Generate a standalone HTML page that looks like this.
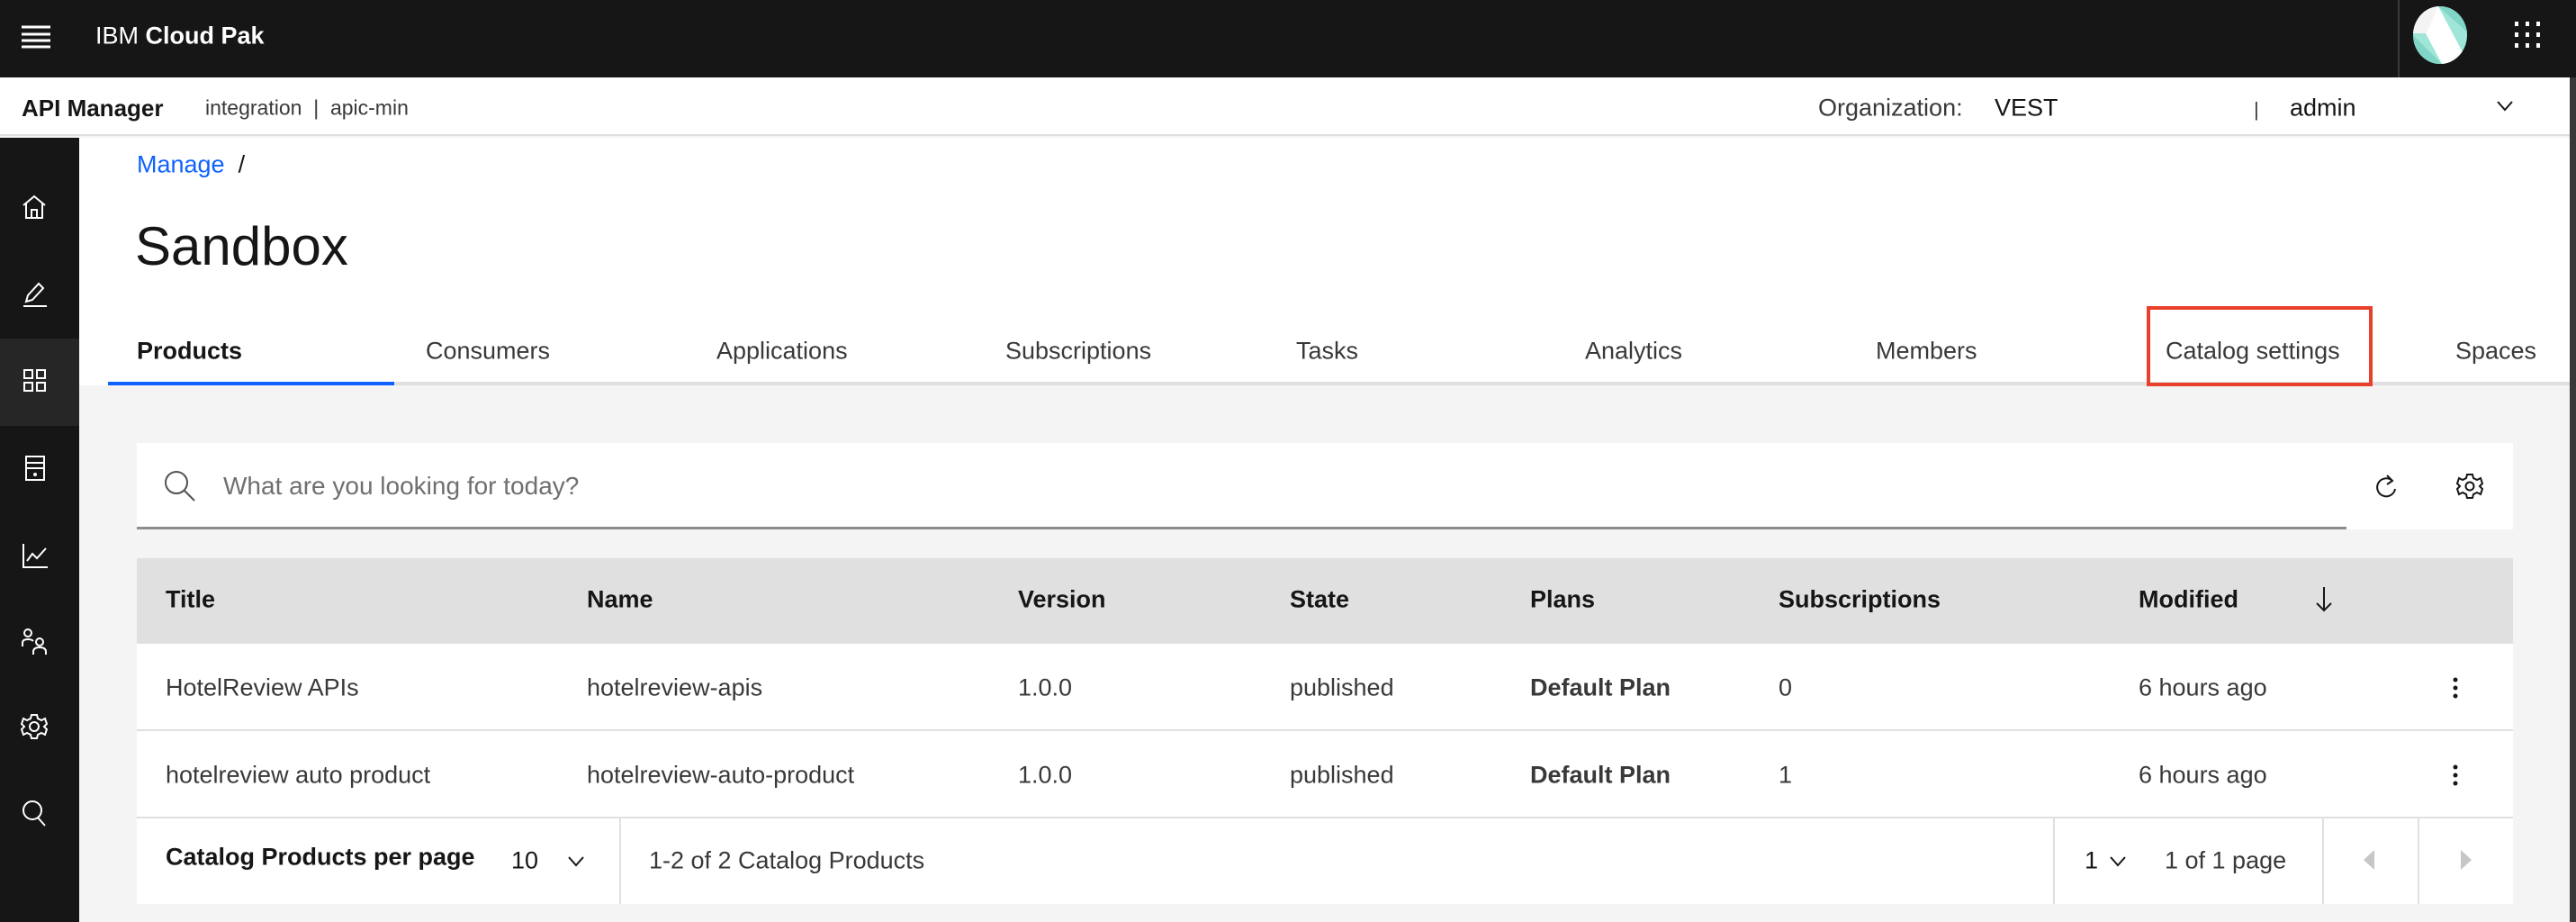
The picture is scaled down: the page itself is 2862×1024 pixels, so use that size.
<!DOCTYPE html>
<html><head><meta charset="utf-8"><style>
*{margin:0;padding:0;box-sizing:border-box}
body{width:2862px;height:1024px;position:relative;overflow:hidden;font-family:"Liberation Sans",sans-serif;background:#f4f4f4;color:#161616}
.a{position:absolute;white-space:nowrap}
.t{font-size:27px;line-height:1;transform:translateY(-50%)}
.b{font-weight:bold}
svg{position:absolute;overflow:visible}
</style></head><body>
<!-- top bar -->
<div class="a" style="left:0;top:0;width:2862px;height:86px;background:#161616"></div>
<div class="a" style="left:2664px;top:0;width:2px;height:86px;background:#393939"></div>
<svg style="left:24px;top:28px" width="32" height="26" viewBox="0 0 32 26"><g stroke="#fff" stroke-width="3"><path d="M0 2H32M0 10H32M0 17H32M0 24H32"/></g></svg>
<div class="a t" style="left:106px;top:40px;color:#fff;font-size:27px">IBM <b>Cloud Pak</b></div>
<svg style="left:2679px;top:7px" width="64" height="64" viewBox="0 0 64 64"><defs><clipPath id="c"><ellipse cx="32" cy="32" rx="30" ry="32"/></clipPath></defs><g clip-path="url(#c)"><rect width="64" height="64" fill="#9fe6d9"/><path d="M0 0H30L64 64H34Z" fill="#fff"/><path d="M30 0H64V30Z" fill="#80d5c6"/><path d="M0 30L34 64H0Z" fill="#80d5c6"/><path d="M0 0H30L17 30H0Z" fill="#f4f4f4"/></g></svg>
<svg style="left:2794px;top:24px" width="30" height="30" viewBox="0 0 30 30"><g fill="#fff"><rect x="0" y="0" width="4" height="5"/><rect x="12" y="0" width="4" height="5"/><rect x="24" y="0" width="4" height="5"/><rect x="0" y="12" width="4" height="5"/><rect x="12" y="12" width="4" height="5"/><rect x="24" y="12" width="4" height="5"/><rect x="0" y="24" width="4" height="5"/><rect x="12" y="24" width="4" height="5"/><rect x="24" y="24" width="4" height="5"/></g></svg>
<!-- sub header -->
<div class="a" style="left:0;top:86px;width:2862px;height:65px;background:#fff;border-bottom:2px solid #e0e0e0"></div>
<div class="a t b" style="left:24px;top:120px;font-size:26px">API Manager</div>
<div class="a t" style="left:228px;top:120px;font-size:23px;color:#393939">integration &nbsp;| &nbsp;apic-min</div>
<div class="a t" style="left:2020px;top:120px;font-size:27px;color:#393939">Organization:</div>
<div class="a t" style="left:2216px;top:120px;font-size:27px">VEST</div>
<div class="a t" style="left:2504px;top:122px;font-size:22px;color:#393939">|</div>
<div class="a t" style="left:2544px;top:120px;font-size:27px">admin</div>
<svg style="left:2774px;top:112px" width="18" height="12" viewBox="0 0 18 12"><path d="M1 1L9 10L17 1" stroke="#161616" stroke-width="2" fill="none"/></svg>
<div class="a" style="left:2855px;top:86px;width:7px;height:938px;background:#393939"></div>
<!-- sidebar -->
<div class="a" style="left:0;top:153px;width:88px;height:871px;background:#161616"></div>
<div class="a" style="left:0;top:376px;width:88px;height:97px;background:#262626"></div>
<svg style="left:24px;top:216px" width="28" height="28" viewBox="0 0 28 28" fill="none" stroke="#fff" stroke-width="2"><path d="M2 12L14 2L26 12M5 10V26H23V10M11 26V17H17V26"/></svg>
<svg style="left:24px;top:313px" width="28" height="28" viewBox="0 0 28 28" fill="none" stroke="#fff" stroke-width="2"><path d="M2 27H28M5 22L7 15L19 2L24 7L12 20Z"/></svg>
<svg style="left:26px;top:410px" width="26" height="26" viewBox="0 0 26 26" fill="none" stroke="#fff" stroke-width="2"><rect x="1" y="1" width="9" height="9"/><rect x="15" y="1" width="9" height="9"/><rect x="1" y="15" width="9" height="9"/><rect x="15" y="15" width="9" height="9"/></svg>
<svg style="left:28px;top:506px" width="22" height="28" viewBox="0 0 22 28" fill="none" stroke="#fff" stroke-width="2"><rect x="1" y="1" width="20" height="26"/><path d="M1 8H21M1 14H21"/><circle cx="11" cy="21" r="1" fill="#fff"/></svg>
<svg style="left:25px;top:603px" width="28" height="28" viewBox="0 0 28 28" fill="none" stroke="#fff" stroke-width="2"><path d="M1 1V27H28M5 20L11 12L16 17L26 6"/></svg>
<svg style="left:24px;top:698px" width="30" height="30" viewBox="0 0 30 30" fill="none" stroke="#fff" stroke-width="2"><circle cx="7" cy="5" r="4"/><path d="M1 20V16Q1 12 7 12Q11 12 13 14"/><circle cx="20" cy="15" r="4"/><path d="M13 29V26Q13 21 20 21Q27 21 27 26V29"/></svg>
<svg style="left:24px;top:793px" width="28" height="28" viewBox="0 0 28 28" fill="none" stroke="#fff" stroke-width="2"><circle cx="14" cy="14" r="5"/><path d="M11 1H17L18 5L22 7L26 5L28 11L25 14L28 17L26 23L22 21L18 23L17 27H11L10 23L6 21L2 23L0 17L3 14L0 11L2 5L6 7L10 5Z"/></svg>
<svg style="left:24px;top:888px" width="28" height="30" viewBox="0 0 28 30" fill="none" stroke="#fff" stroke-width="2"><circle cx="12" cy="12" r="10"/><path d="M18 20L26 29"/></svg>
<!-- content header white -->
<div class="a" style="left:88px;top:153px;width:2767px;height:275px;background:#fff"></div>
<div class="a t" style="left:152px;top:183px;font-size:27px;color:#0f62fe">Manage <span style="color:#161616">&nbsp;/</span></div>
<div class="a t" style="left:150px;top:274px;font-size:60px">Sandbox</div>
<!-- tabs -->
<div class="a" style="left:120px;top:424px;width:2735px;height:4px;background:#e0e0e0"></div>
<div class="a" style="left:120px;top:424px;width:318px;height:4px;background:#0f62fe"></div>
<div class="a t b" style="left:152px;top:390px">Products</div>
<div class="a t" style="left:473px;top:390px;color:#393939">Consumers</div>
<div class="a t" style="left:796px;top:390px;color:#393939">Applications</div>
<div class="a t" style="left:1117px;top:390px;color:#393939">Subscriptions</div>
<div class="a t" style="left:1440px;top:390px;color:#393939">Tasks</div>
<div class="a t" style="left:1761px;top:390px;color:#393939">Analytics</div>
<div class="a t" style="left:2084px;top:390px;color:#393939">Members</div>
<div class="a t" style="left:2406px;top:390px;color:#393939">Catalog settings</div>
<div class="a t" style="left:2728px;top:390px;color:#393939">Spaces</div>
<div class="a" style="left:2385px;top:340px;width:251px;height:89px;border:4px solid #e8402a"></div>
<!-- search -->
<div class="a" style="left:152px;top:492px;width:2640px;height:96px;background:#fff"></div>
<div class="a" style="left:152px;top:585px;width:2455px;height:3px;background:#8d8d8d"></div>
<svg style="left:182px;top:522px" width="36" height="36" viewBox="0 0 36 36" fill="none" stroke="#525252" stroke-width="2"><circle cx="14" cy="14" r="12"/><path d="M23 23L34 34"/></svg>
<div class="a t" style="left:248px;top:540px;font-size:28px;color:#6f6f6f">What are you looking for today?</div>
<svg style="left:2638px;top:526px" width="26" height="28" viewBox="0 0 26 28" fill="none" stroke="#161616" stroke-width="2"><path d="M20 8A10 10 0 1 0 23 17"/><path d="M14 2L20 8L14 12"/></svg>
<svg style="left:2730px;top:526px" width="28" height="28" viewBox="0 0 28 28" fill="none" stroke="#161616" stroke-width="2"><circle cx="14" cy="14" r="4.5"/><path d="M11 1H17L18 5L22 7L26 5L28 11L25 14L28 17L26 23L22 21L18 23L17 27H11L10 23L6 21L2 23L0 17L3 14L0 11L2 5L6 7L10 5Z"/></svg>
<!-- table -->
<div class="a" style="left:152px;top:620px;width:2640px;height:95px;background:#e0e0e0"></div>
<div class="a" style="left:152px;top:715px;width:2640px;height:95px;background:#fff"></div>
<div class="a" style="left:152px;top:810px;width:2640px;height:2px;background:#e0e0e0"></div>
<div class="a" style="left:152px;top:812px;width:2640px;height:95px;background:#fff"></div>
<div class="a" style="left:152px;top:907px;width:2640px;height:2px;background:#e0e0e0"></div>
<div class="a" style="left:152px;top:909px;width:2640px;height:95px;background:#fff"></div>
<div class="a t b" style="left:184px;top:666px">Title</div>
<div class="a t b" style="left:652px;top:666px">Name</div>
<div class="a t b" style="left:1131px;top:666px">Version</div>
<div class="a t b" style="left:1433px;top:666px">State</div>
<div class="a t b" style="left:1700px;top:666px">Plans</div>
<div class="a t b" style="left:1976px;top:666px">Subscriptions</div>
<div class="a t b" style="left:2376px;top:666px">Modified</div>
<svg style="left:2572px;top:652px" width="20" height="28" viewBox="0 0 20 28" fill="none" stroke="#161616" stroke-width="2"><path d="M10 0V26M2 18L10 26L18 18"/></svg>
<div class="a t" style="left:184px;top:764px;color:#393939">HotelReview APIs</div>
<div class="a t" style="left:652px;top:764px;color:#393939">hotelreview-apis</div>
<div class="a t" style="left:1131px;top:764px;color:#393939">1.0.0</div>
<div class="a t" style="left:1433px;top:764px;color:#393939">published</div>
<div class="a t b" style="left:1700px;top:764px;color:#393939">Default Plan</div>
<div class="a t" style="left:1976px;top:764px;color:#393939">0</div>
<div class="a t" style="left:2376px;top:764px;color:#393939">6 hours ago</div>
<div class="a t" style="left:184px;top:861px;color:#393939">hotelreview auto product</div>
<div class="a t" style="left:652px;top:861px;color:#393939">hotelreview-auto-product</div>
<div class="a t" style="left:1131px;top:861px;color:#393939">1.0.0</div>
<div class="a t" style="left:1433px;top:861px;color:#393939">published</div>
<div class="a t b" style="left:1700px;top:861px;color:#393939">Default Plan</div>
<div class="a t" style="left:1976px;top:861px;color:#393939">1</div>
<div class="a t" style="left:2376px;top:861px;color:#393939">6 hours ago</div>
<svg style="left:2725px;top:752px" width="6" height="24" viewBox="0 0 6 24" fill="#161616"><circle cx="3" cy="3" r="2.5"/><circle cx="3" cy="12" r="2.5"/><circle cx="3" cy="21" r="2.5"/></svg>
<svg style="left:2725px;top:849px" width="6" height="24" viewBox="0 0 6 24" fill="#161616"><circle cx="3" cy="3" r="2.5"/><circle cx="3" cy="12" r="2.5"/><circle cx="3" cy="21" r="2.5"/></svg>
<!-- footer -->
<div class="a" style="left:688px;top:909px;width:2px;height:95px;background:#e0e0e0"></div>
<div class="a" style="left:2281px;top:909px;width:2px;height:95px;background:#e0e0e0"></div>
<div class="a" style="left:2580px;top:909px;width:2px;height:95px;background:#e0e0e0"></div>
<div class="a" style="left:2686px;top:909px;width:2px;height:95px;background:#e0e0e0"></div>
<div class="a t b" style="left:184px;top:952px">Catalog Products per page</div>
<div class="a t" style="left:568px;top:956px">10</div>
<svg style="left:631px;top:951px" width="18" height="12" viewBox="0 0 18 12"><path d="M1 1L9 10L17 1" stroke="#161616" stroke-width="2" fill="none"/></svg>
<div class="a t" style="left:721px;top:956px;color:#393939">1-2 of 2 Catalog Products</div>
<div class="a t" style="left:2316px;top:956px">1</div>
<svg style="left:2344px;top:951px" width="18" height="12" viewBox="0 0 18 12"><path d="M1 1L9 10L17 1" stroke="#161616" stroke-width="2" fill="none"/></svg>
<div class="a t" style="left:2405px;top:956px;color:#393939">1 of 1 page</div>
<svg style="left:2626px;top:944px" width="12" height="22" viewBox="0 0 12 22"><path d="M12 0V22L0 11Z" fill="#c6c6c6"/></svg>
<svg style="left:2734px;top:944px" width="12" height="22" viewBox="0 0 12 22"><path d="M0 0V22L12 11Z" fill="#c6c6c6"/></svg>
</body></html>
